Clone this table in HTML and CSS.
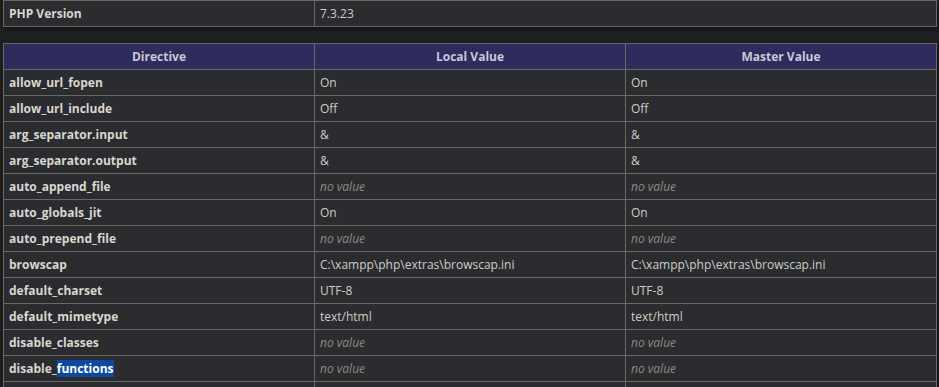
FILE: index.html
```html
<!DOCTYPE html>
<html>
<head>
<meta charset="utf-8">
<link rel="stylesheet" href="styles.css">
</head>
<body>
<div class="page">
  <table class="info">
    <tr><td class="e">PHP Version</td><td class="v">7.3.23</td></tr>
  </table>
  <table class="info">
    <tr class="h"><th>Directive</th><th>Local Value</th><th>Master Value</th></tr>
    <tr><td class="e">allow_url_fopen</td><td class="v">On</td><td class="v">On</td></tr>
    <tr><td class="e">allow_url_include</td><td class="v">Off</td><td class="v">Off</td></tr>
    <tr><td class="e">arg_separator.input</td><td class="v">&amp;</td><td class="v">&amp;</td></tr>
    <tr><td class="e">arg_separator.output</td><td class="v">&amp;</td><td class="v">&amp;</td></tr>
    <tr><td class="e">auto_append_file</td><td class="v"><i>no value</i></td><td class="v"><i>no value</i></td></tr>
    <tr><td class="e">auto_globals_jit</td><td class="v">On</td><td class="v">On</td></tr>
    <tr><td class="e">auto_prepend_file</td><td class="v"><i>no value</i></td><td class="v"><i>no value</i></td></tr>
    <tr><td class="e">browscap</td><td class="v">C:\xampp\php\extras\browscap.ini</td><td class="v">C:\xampp\php\extras\browscap.ini</td></tr>
    <tr><td class="e">default_charset</td><td class="v">UTF-8</td><td class="v">UTF-8</td></tr>
    <tr><td class="e">default_mimetype</td><td class="v">text/html</td><td class="v">text/html</td></tr>
    <tr><td class="e">disable_classes</td><td class="v"><i>no value</i></td><td class="v"><i>no value</i></td></tr>
    <tr><td class="e">disable_<span class="sel">functions</span></td><td class="v"><i>no value</i></td><td class="v"><i>no value</i></td></tr>
    <tr class="blank"><td class="e"></td><td class="v"></td><td class="v"></td></tr>
  </table>
</div>
</body>
</html>
```
FILE: styles.css
```css
html, body {
  margin: 0;
  padding: 0;
  background: #1e2022;
  color: #d2cec7;
  font-family: "Open Sans", "Noto Sans", sans-serif;
}
.page {
  display: flex;
  flex-direction: column;
  gap: 16px;
  padding-left: 3px;
}
.info {
  border-collapse: collapse;
  width: 934px;
  box-shadow: 1px 2px 3px #111214;
  table-layout: fixed;
}
.info td, .info th {
  border: 1px solid #6b6862;
  font-size: 12px;
  line-height: 17px;
  padding: 4px 5px;
  vertical-align: baseline;
  text-align: left;
  background: #2a2c2f;
  white-space: nowrap;
  overflow: hidden;
}
.info .blank td {
  height: 17px;
}
.info .e {
  width: 300px;
  font-weight: bold;
  color: #d9d6d0;
}
.info .v {
  color: #d0ccc5;
}
.info .v i {
  color: #8f8a82;
}
.info .h th {
  background: #2e2b5d;
  color: #c9c7d9;
  font-weight: bold;
  text-align: center;
}
.sel {
  background: #0b4aa0;
  color: #ffffff;
}
```
